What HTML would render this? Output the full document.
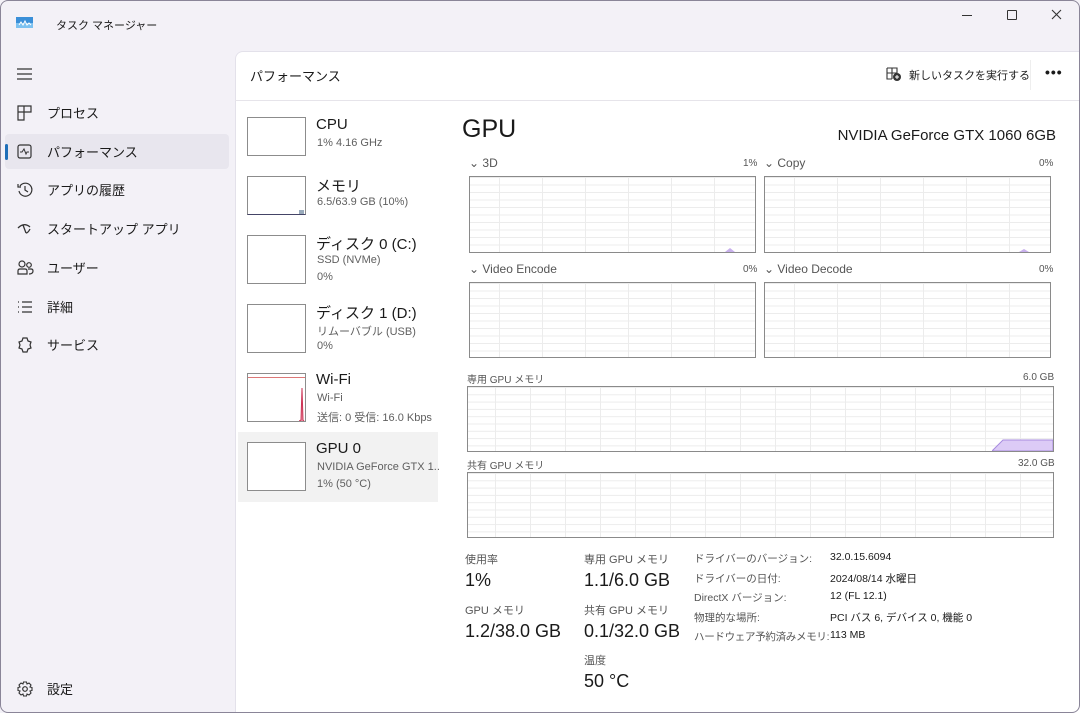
<!DOCTYPE html>
<html><head><meta charset="utf-8"><style>
*{margin:0;padding:0;box-sizing:border-box}
body{width:1080px;height:713px;overflow:hidden;background:#fff;font-family:"Liberation Sans","Noto Sans CJK JP",sans-serif;color:#1a1a1a;position:relative}
.win{position:absolute;left:0;top:0;width:1080px;height:713px;background:#f3f1f7;overflow:hidden}
.bd{position:absolute;left:0;top:0;width:1080px;height:713px;border:1px solid #8a8598;border-radius:8px}
.a{position:absolute;white-space:nowrap}
.main{position:absolute;left:235px;top:51px;width:845px;height:662px;background:#fff;border-top-left-radius:8px;border-left:1px solid #e3e1ea;border-top:1px solid #e3e1ea}
.nav{position:absolute;left:47px;font-size:13px;color:#1a1a1a}
.ic{position:absolute;left:17px}
.th{position:absolute;left:247px;width:59px;border:1px solid #8c8c8c;background:#fff}
.tt{position:absolute;left:316px;font-size:15px}
.ts{position:absolute;left:317px;font-size:11px;color:#5f5f5f}
.g{position:absolute;border:1px solid #8a8a8a;background-color:#fff;
background-image:linear-gradient(#ececec 1px,transparent 1px),linear-gradient(90deg,#ececec 1px,transparent 1px);}
.gl{position:absolute;font-size:12px;color:#555}
.sm{position:absolute;font-size:10px;color:#555}
.sl{position:absolute;font-size:11px;color:#555}
.sv{position:absolute;font-size:18px;color:#1a1a1a}
.dl{position:absolute;left:694px;font-size:10.5px;color:#555}
.dv{position:absolute;left:830px;font-size:10.5px;color:#1a1a1a}
</style></head><body><div class="win">
<svg class="a" style="left:16px;top:17px" width="17" height="11"><rect width="17" height="11" fill="#3a8fd8"/><rect y="6" width="17" height="5" fill="#7cc1f0"/><path d="M3 8l2-3 2 3 2-4 2 4 2-2 2 2" stroke="#fff" stroke-width="1" fill="none"/></svg>
<div class="a" style="left:56px;top:17px;font-size:11px">タスク マネージャー</div>
<div class="a" style="left:962px;top:15px;width:10px;height:1px;background:#333"></div>
<div class="a" style="left:1007px;top:10px;width:10px;height:10px;border:1px solid #333;border-radius:1px"></div>
<svg class="a" style="left:1051px;top:9px" width="11" height="11"><path d="M1 1l9 9M10 1l-9 9" stroke="#333" stroke-width="1.1"/></svg>
<svg class="a" style="left:17px;top:68px" width="16" height="12"><path d="M0 1h15M0 6h15M0 11h15" stroke="#333" stroke-width="1.2"/></svg>
<svg class="ic" style="top:105px" width="16" height="16"><path d="M1 1h13v6H7v8H1z M1 7h6M7 1v6" stroke="#333" fill="none" stroke-width="1.2"/></svg>
<div class="nav" style="top:103px">プロセス</div>
<div class="a" style="left:5px;top:134px;width:224px;height:35px;background:#e8e6ee;border-radius:4px"></div>
<div class="a" style="left:5px;top:144px;width:3px;height:16px;background:#1f6fb8;border-radius:2px"></div>
<svg class="ic" style="top:144px" width="16" height="16"><rect x="1" y="1" width="13" height="13" rx="2" stroke="#333" fill="none" stroke-width="1.2"/><path d="M3 8h2l2-3 2 5 1-2h2" stroke="#333" fill="none"/></svg>
<div class="nav" style="top:142px">パフォーマンス</div>
<svg class="ic" style="top:182px" width="16" height="16"><path d="M3 4a6.5 6.5 0 1 1-1 5M1 2v3h3M8 4v4l3 2" stroke="#333" fill="none" stroke-width="1.2"/></svg>
<div class="nav" style="top:180px">アプリの履歴</div>
<svg class="ic" style="top:221px" width="17" height="16"><path d="M1 7q6-6 12-1M6 4l3 8M9 12q2 0 4-4" stroke="#333" fill="none" stroke-width="1.3"/></svg>
<div class="nav" style="top:219px">スタートアップ アプリ</div>
<svg class="ic" style="top:260px" width="17" height="16"><circle cx="5" cy="4" r="3" stroke="#333" fill="none" stroke-width="1.2"/><circle cx="12" cy="5" r="2.3" stroke="#333" fill="none" stroke-width="1.2"/><path d="M1 14v-3q0-2 2-2h5q2 0 2 2v3zM11 9h3q2 0 2 2q0 3-4 3" stroke="#333" fill="none" stroke-width="1.2"/></svg>
<div class="nav" style="top:258px">ユーザー</div>
<svg class="ic" style="top:299px" width="16" height="16"><path d="M1 3h1M1 8h1M1 13h1M5 3h10M5 8h10M5 13h10" stroke="#333" stroke-width="1.3"/></svg>
<div class="nav" style="top:297px">詳細</div>
<svg class="ic" style="top:337px" width="16" height="17"><path d="M6 1h4l1 3 3 1-1 3 1 3-3 1-1 3H6l-1-3-3-1 1-3-1-3 3-1z" stroke="#333" fill="none" stroke-width="1.2"/></svg>
<div class="nav" style="top:335px">サービス</div>
<svg class="ic" style="top:681px" width="16" height="16"><circle cx="8" cy="8" r="2.3" stroke="#333" fill="none" stroke-width="1.2"/><path d="M6.5 1h3l.5 2 2-1 2 2-1 2 2 .5v3l-2 .5 1 2-2 2-2-1-.5 2h-3l-.5-2-2 1-2-2 1-2-2-.5v-3l2-.5-1-2 2-2 2 1z" stroke="#333" fill="none" stroke-width="1.1"/></svg>
<div class="nav" style="top:679px">設定</div>
<div class="main"></div>
<div class="a" style="left:235px;top:100px;width:845px;height:1px;background:#e6e4ea"></div>
<div class="a" style="left:250px;top:66px;font-size:13px">パフォーマンス</div>
<svg class="a" style="left:886px;top:67px" width="16" height="15"><path d="M1 1h10v5M1 1v11h5M1 6h10M6 1v11" stroke="#333" fill="none" stroke-width="1.1"/><circle cx="11" cy="10" r="4" fill="#333"/><path d="M9 10h4M11 8v4" stroke="#fff"/></svg>
<div class="a" style="left:909px;top:67px;font-size:11px">新しいタスクを実行する</div>
<div class="a" style="left:1030px;top:60px;width:1px;height:30px;background:#eee"></div>
<div class="a" style="left:1045px;top:64px;font-size:14px;font-weight:bold;letter-spacing:1px">•••</div>
<div class="th" style="top:117px;height:39px"></div><div class="tt" style="top:116px">CPU</div><div class="ts" style="top:137px">1% 4.16 GHz</div>
<div class="th" style="top:176px;height:39px;border-bottom-color:#446"></div><div class="a" style="left:299px;top:210px;width:5px;height:4px;background:#9ab;"></div><div class="tt" style="top:175px">メモリ</div><div class="ts" style="top:196px">6.5/63.9 GB (10%)</div>
<div class="th" style="top:235px;height:49px"></div><div class="tt" style="top:233px">ディスク 0 (C:)</div><div class="ts" style="top:254px">SSD (NVMe)</div><div class="ts" style="top:271px">0%</div>
<div class="th" style="top:304px;height:49px"></div><div class="tt" style="top:302px">ディスク 1 (D:)</div><div class="ts" style="top:323px">リムーバブル (USB)</div><div class="ts" style="top:340px">0%</div>
<div class="th" style="top:373px;height:49px"></div><div class="a" style="left:248px;top:377px;width:57px;height:1px;background:#d77"></div><svg class="a" style="left:299px;top:388px" width="6" height="33"><path d="M0 33L2 32L3 0L4 32L5 33" stroke="#c35" fill="#e9a"/></svg>
<div class="tt" style="top:371px">Wi-Fi</div><div class="ts" style="top:392px">Wi-Fi</div><div class="ts" style="top:409px">送信: 0 受信: 16.0 Kbps</div>
<div class="a" style="left:238px;top:432px;width:200px;height:70px;background:#f2f2f2"></div>
<div class="th" style="top:442px;height:49px"></div><div class="tt" style="top:440px">GPU 0</div><div class="ts" style="top:461px">NVIDIA GeForce GTX 1..</div><div class="ts" style="top:478px">1% (50 °C)</div>
<div class="a" style="left:462px;top:115px;font-size:25px">GPU</div>
<div class="a" style="right:24px;top:127px;font-size:15px">NVIDIA GeForce GTX 1060 6GB</div>
<div class="gl" style="left:469px;top:156px">⌄ 3D</div><div class="sm" style="left:743px;top:158px">1%</div>
<div class="gl" style="left:764px;top:156px">⌄ Copy</div><div class="sm" style="left:1039px;top:158px">0%</div>
<div class="g" style="left:469px;top:176px;width:287px;height:77px;background-size:43px 7.5px;background-position:-14px 0"></div>
<div class="g" style="left:764px;top:176px;width:287px;height:77px;background-size:43px 7.5px;background-position:-14px 0"></div>
<svg class="a" style="left:725px;top:246px" width="20" height="6"><path d="M0 6l5-4 5 4z" fill="#c8b0ec"/></svg>
<svg class="a" style="left:1019px;top:246px" width="14" height="6"><path d="M0 6l5-3 5 3z" fill="#c8b0ec"/></svg>
<div class="gl" style="left:469px;top:262px">⌄ Video Encode</div><div class="sm" style="left:743px;top:264px">0%</div>
<div class="gl" style="left:764px;top:262px">⌄ Video Decode</div><div class="sm" style="left:1039px;top:264px">0%</div>
<div class="g" style="left:469px;top:282px;width:287px;height:76px;background-size:43px 7.5px;background-position:-14px 0"></div>
<div class="g" style="left:764px;top:282px;width:287px;height:76px;background-size:43px 7.5px;background-position:-14px 0"></div>
<div class="sm" style="left:467px;top:371px">専用 GPU メモリ</div><div class="sm" style="left:1023px;top:372px">6.0 GB</div>
<div class="g" style="left:467px;top:386px;width:587px;height:66px;background-size:35px 7.3px;background-position:-8px 0"></div>
<svg class="a" style="left:992px;top:437px" width="61" height="14"><path d="M0 14L11 3H61V14z" fill="#dccbf6" stroke="#a78bdf"/></svg>
<div class="sm" style="left:467px;top:457px">共有 GPU メモリ</div><div class="sm" style="left:1018px;top:458px">32.0 GB</div>
<div class="g" style="left:467px;top:472px;width:587px;height:66px;background-size:35px 7.3px;background-position:-8px 0"></div>
<div class="sl" style="left:465px;top:551px">使用率</div><div class="sv" style="left:465px;top:570px">1%</div>
<div class="sl" style="left:465px;top:602px">GPU メモリ</div><div class="sv" style="left:465px;top:621px">1.2/38.0 GB</div>
<div class="sl" style="left:584px;top:551px">専用 GPU メモリ</div><div class="sv" style="left:584px;top:570px">1.1/6.0 GB</div>
<div class="sl" style="left:584px;top:602px">共有 GPU メモリ</div><div class="sv" style="left:584px;top:621px">0.1/32.0 GB</div>
<div class="sl" style="left:584px;top:652px">温度</div><div class="sv" style="left:584px;top:671px">50 °C</div>
<div class="dl" style="top:551px">ドライバーのバージョン:</div><div class="dv" style="top:551px">32.0.15.6094</div>
<div class="dl" style="top:571px">ドライバーの日付:</div><div class="dv" style="top:571px">2024/08/14 水曜日</div>
<div class="dl" style="top:590px">DirectX バージョン:</div><div class="dv" style="top:590px">12 (FL 12.1)</div>
<div class="dl" style="top:610px">物理的な場所:</div><div class="dv" style="top:610px">PCI バス 6, デバイス 0, 機能 0</div>
<div class="dl" style="top:629px;letter-spacing:-0.3px">ハードウェア予約済みメモリ:</div><div class="dv" style="top:629px">113 MB</div>
</div><div class="bd"></div></body></html>
